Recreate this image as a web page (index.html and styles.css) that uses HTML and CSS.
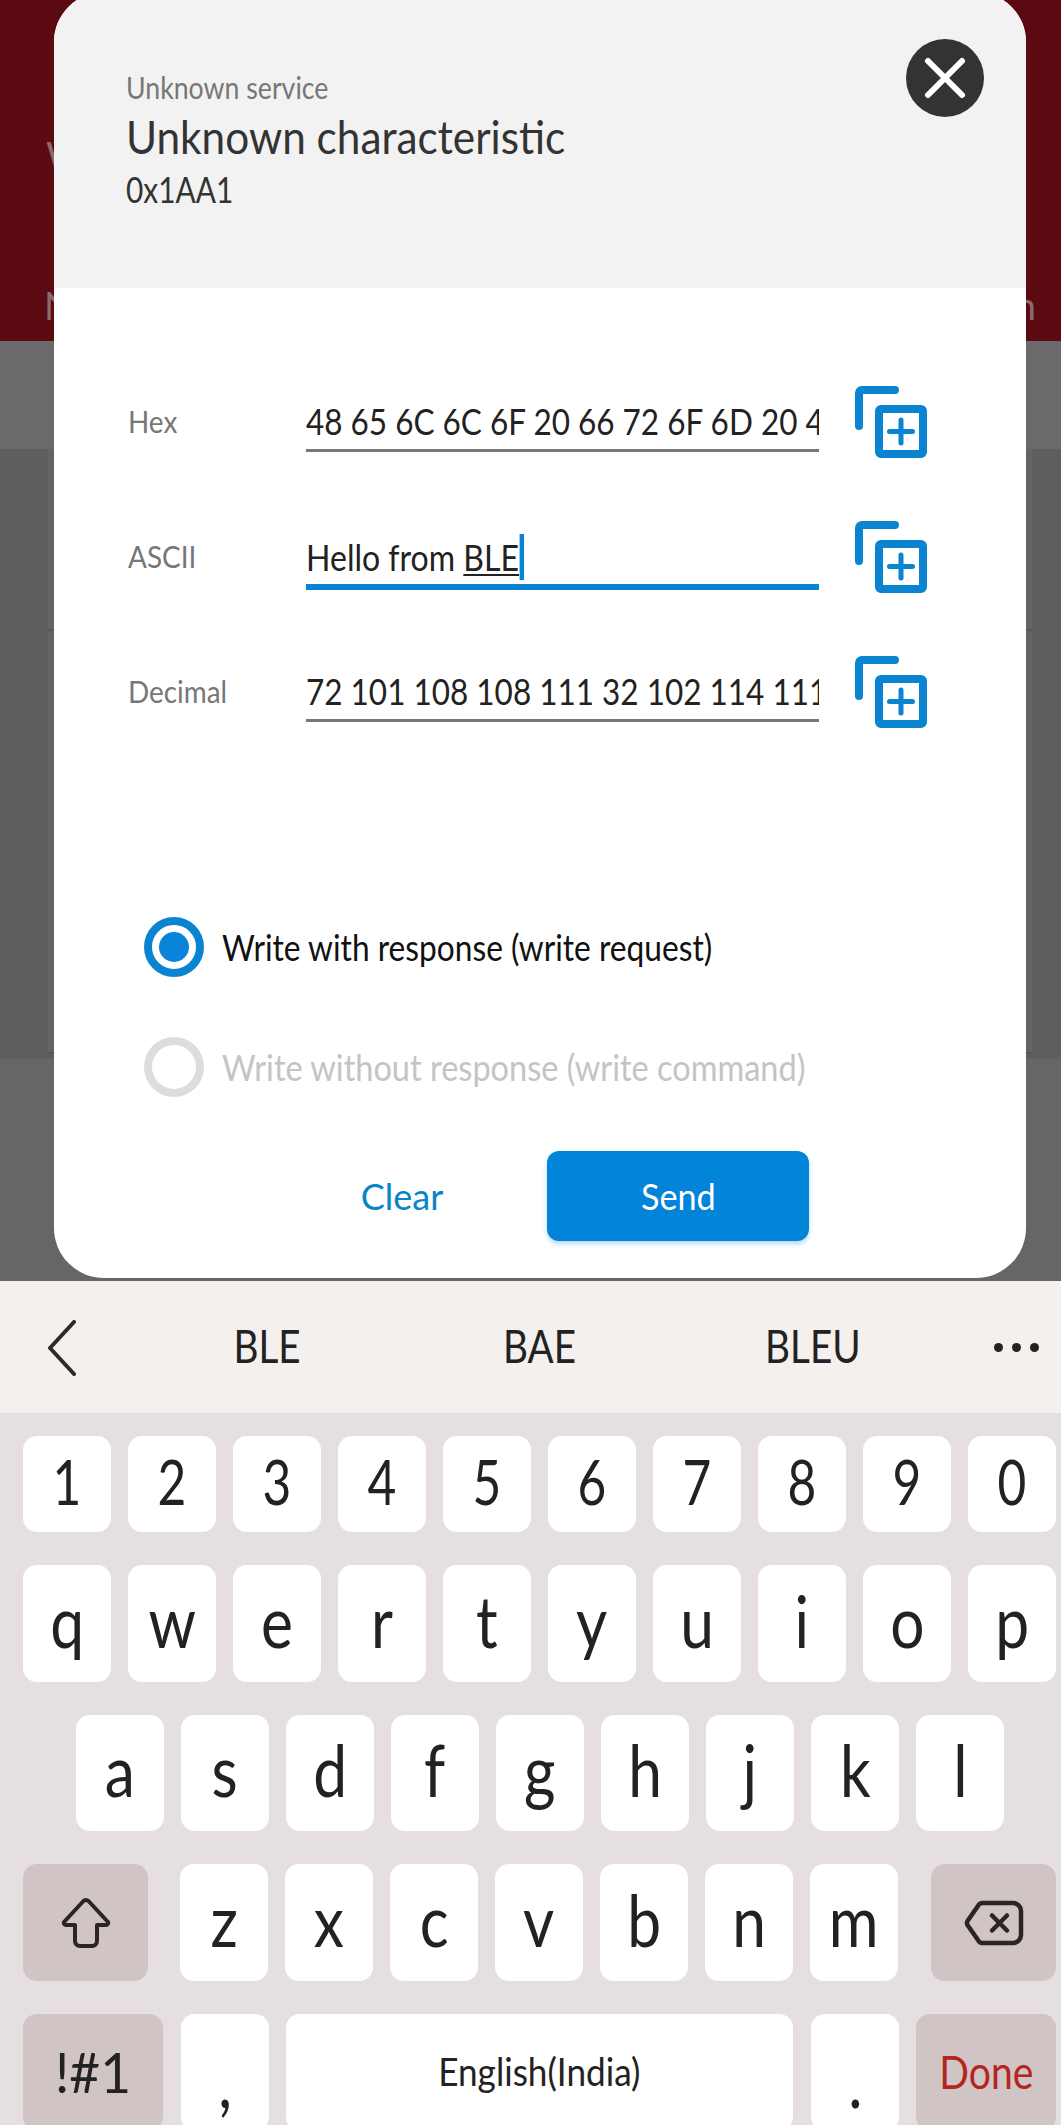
FILE: index.html
```html
<!DOCTYPE html>
<html lang="en">
<head>
  <meta charset="UTF-8" />
  <meta name="viewport" content="width=device-width, initial-scale=1.0"/>
  <title>Write characteristic</title>
  <link rel="stylesheet" href="styles.css">
</head>
<body>

  <svg class="defs" width="0" height="0">
    <symbol id="copy-icon" viewBox="0 0 72 72">
      <path d="M4 40V7a3 3 0 0 1 3-3h33" fill="none" stroke="#0a84d0" stroke-width="8" stroke-linecap="round"/>
      <rect x="24" y="23" width="44" height="45" rx="2" fill="none" stroke="#0a84d0" stroke-width="8"/>
      <path d="M46 34v23M34.500 45.500h23" fill="none" stroke="#0a84d0" stroke-width="5" stroke-linecap="round"/>
    </symbol>
  </svg>

  <!-- App behind the dialog -->
  <div class="backdrop">
    <div class="app-bar">
      <span class="app-bar-w">W</span>
      <div class="app-tabs"><span>N</span><span>n</span></div>
    </div>
    <div class="app-strip"></div>
    <div class="app-list">
      <div class="app-card"></div>
      <div class="app-card"></div>
    </div>

    <!-- Dialog -->
    <div class="modal">
      <div class="modal-head">
        <div class="modal-titles">
          <div class="service"><span>Unknown service</span></div>
          <div class="characteristic"><span>Unknown characteristic</span></div>
          <div class="uuid"><span>0x1AA1</span></div>
        </div>
        <div class="close-btn">
          <svg width="44" height="44" viewBox="0 0 44 44">
            <path d="M5 5l34 34M39 5L5 39" stroke="#fff" stroke-width="6" stroke-linecap="round"/>
          </svg>
        </div>
      </div>

      <div class="modal-body">
        <div class="field-row">
          <div class="field-label"><span>Hex</span></div>
          <div class="field-value"><span>48 65 6C 6C 6F 20 66 72 6F 6D 20 42 4C 45</span></div>
          <svg class="copy"><use href="#copy-icon"/></svg>
        </div>
        <div class="field-row">
          <div class="field-label"><span>ASCII</span></div>
          <div class="field-value field-active"><span>Hello from <u>BLE</u><i class="caret"></i></span></div>
          <svg class="copy"><use href="#copy-icon"/></svg>
        </div>
        <div class="field-row">
          <div class="field-label"><span>Decimal</span></div>
          <div class="field-value"><span>72 101 108 108 111 32 102 114 111 109 32 66 76 69</span></div>
          <svg class="copy"><use href="#copy-icon"/></svg>
        </div>

        <div class="radio-group">
          <div class="radio-row">
            <span class="radio radio-on"></span>
            <span class="radio-text">Write with response (write request)</span>
          </div>
          <div class="radio-row radio-off">
            <span class="radio"></span>
            <span class="radio-text">Write without response (write command)</span>
          </div>
        </div>

        <div class="actions">
          <div class="btn-clear">Clear</div>
          <div class="btn-send"><span>Send</span></div>
        </div>
      </div>
    </div>
  </div>

  <!-- Keyboard suggestions -->
  <div class="suggest">
    <svg class="suggest-back" width="30" height="56" viewBox="0 0 30 56">
      <path d="M27 2L3 28l24 26" fill="none" stroke="#2b2b2b" stroke-width="4" stroke-linecap="round" stroke-linejoin="round"/>
    </svg>
    <div class="suggest-word"><span>BLE</span></div>
    <div class="suggest-word"><span>BAE</span></div>
    <div class="suggest-word"><span>BLEU</span></div>
    <div class="suggest-more"><i></i><i></i><i></i></div>
  </div>

  <!-- Keyboard -->
  <div class="keyboard">
    <div class="key-row row-digits">
      <div class="key"><span>1</span></div><div class="key"><span>2</span></div><div class="key"><span>3</span></div><div class="key"><span>4</span></div><div class="key"><span>5</span></div>
      <div class="key"><span>6</span></div><div class="key"><span>7</span></div><div class="key"><span>8</span></div><div class="key"><span>9</span></div><div class="key"><span>0</span></div>
    </div>
    <div class="key-row row-top">
      <div class="key"><span>q</span></div><div class="key"><span>w</span></div><div class="key"><span>e</span></div><div class="key"><span>r</span></div><div class="key"><span>t</span></div>
      <div class="key"><span>y</span></div><div class="key"><span>u</span></div><div class="key"><span>i</span></div><div class="key"><span>o</span></div><div class="key"><span>p</span></div>
    </div>
    <div class="key-row row-home">
      <div class="key"><span>a</span></div><div class="key"><span>s</span></div><div class="key"><span>d</span></div><div class="key"><span>f</span></div><div class="key"><span>g</span></div>
      <div class="key"><span>h</span></div><div class="key"><span>j</span></div><div class="key"><span>k</span></div><div class="key"><span>l</span></div>
    </div>
    <div class="key-row row-shift">
      <div class="key key-mod key-shift">
        <svg width="50" height="52" viewBox="0 0 50 52">
          <path d="M22.500 4L3.500 24.500a2 2 0 0 0 1.500 3.500H14V44a5 5 0 0 0 5 5H31a5 5 0 0 0 5-5V28H45a2 2 0 0 0 1.500-3.500L27.500 4a3.500 3.500 0 0 0-5 0Z" fill="none" stroke="#2b2526" stroke-width="4" stroke-linejoin="round"/>
        </svg>
      </div>
      <div class="key"><span>z</span></div><div class="key"><span>x</span></div><div class="key"><span>c</span></div><div class="key"><span>v</span></div><div class="key"><span>b</span></div>
      <div class="key"><span>n</span></div><div class="key"><span>m</span></div>
      <div class="key key-mod key-del">
        <svg width="60" height="46" viewBox="0 0 60 46">
          <path d="M18 3H49a8 8 0 0 1 8 8V35a8 8 0 0 1-8 8H18a4 4 0 0 1-3-1.500L3.500 25a4 4 0 0 1 0-4L15 4.500A4 4 0 0 1 18 3Z" fill="none" stroke="#2b2526" stroke-width="4.500" stroke-linejoin="round"/>
          <path d="M28 15.500l15 15M43 15.500l-15 15" stroke="#2b2526" stroke-width="4.500" stroke-linecap="round"/>
        </svg>
      </div>
    </div>
    <div class="key-row row-bottom">
      <div class="key key-mod key-sym"><span>!#1</span></div>
      <div class="key key-punct"><span>,</span></div>
      <div class="key key-space"><span>English(India)</span></div>
      <div class="key key-punct"><span>.</span></div>
      <div class="key key-mod key-done"><span>Done</span></div>
    </div>
  </div>

</body>
</html>
```

FILE: styles.css
```css
/* ======= Base ======= */
html, body {
  margin: 0;
  padding: 0;
  height: 2125px;
  overflow: hidden;
}
body {
  width: 1061px;
  font-family: "Lato", "Liberation Sans", sans-serif;
  background: #e6dfe1;
  color: #222;
}
.defs {
  display: block;
  height: 0;
}

/* The screen uses a tall narrow font: squeeze the nearest installed one */
.service span, .characteristic span, .uuid span,
.field-label span, .field-value span, .radio-text {
  display: inline-block;
  transform-origin: left center;
}
.btn-send span, .suggest-word span, .key span {
  display: inline-block;
  transform-origin: center;
}

/* ======= App behind the dialog ======= */
.backdrop {
  position: relative;
  height: 1281px;
  background: #666;
  overflow: hidden;
}
.app-bar {
  height: 341px;
  box-sizing: border-box;
  background: #5a0a10;
  color: #8d6a6d;
  padding: 136px 25px 0 46px;
  font-size: 38px;
  line-height: 38px;
}
.app-tabs {
  display: flex;
  justify-content: space-between;
  margin: 112px 0 0 -2px;
}
.app-strip {
  height: 108px;
  background: #6a6a6a;
}
.app-list {
  height: 610px;
  box-sizing: border-box;
  background: #5e5e5e;
  padding: 0 29px 0 48px;
}
.app-card {
  height: 180px;
  background: #646464;
  border-bottom: 2px solid #565656;
}
.app-card + .app-card {
  height: 421px;
}

/* ======= Dialog ======= */
.modal {
  position: absolute;
  left: 54px;
  top: -8px;
  width: 972px;
  height: 1286px;
  background: #fff;
  border-radius: 50px;
  overflow: hidden;
}
.modal-head {
  height: 296px;
  box-sizing: border-box;
  background: #f2f2f2;
  padding: 77px 42px 0 72px;
  display: flex;
  justify-content: space-between;
  align-items: flex-start;
}
.service {
  font-size: 30px;
  line-height: 36px;
  color: #777;
}
.service span {
  transform: scaleX(0.89);
}
.characteristic {
  font-size: 46px;
  line-height: 54px;
  margin-top: 5px;
  color: #333;
}
.characteristic span {
  transform: scaleX(0.92);
}
.uuid {
  font-size: 36px;
  line-height: 44px;
  margin-top: 3px;
  color: #333;
}
.uuid span {
  transform: scaleX(0.83);
}
.close-btn {
  width: 78px;
  height: 78px;
  margin-top: -30px;
  border-radius: 50%;
  background: #333;
  display: flex;
  align-items: center;
  justify-content: center;
}

.modal-body {
  padding: 80px 0 0 74px;
}
.field-row {
  display: flex;
  align-items: flex-end;
  height: 84px;
  margin-bottom: 51px;
}
.field-label {
  width: 178px;
  font-size: 30px;
  line-height: 40px;
  color: #777;
  padding-bottom: 11px;
}
.field-label span {
  transform: scaleX(0.93);
}
.field-value {
  width: 513px;
  box-sizing: border-box;
  height: 50px;
  font-size: 36px;
  line-height: 38px;
  white-space: nowrap;
  overflow: hidden;
  border-bottom: 3px solid #777;
  color: #222;
}
.field-value span {
  transform: scaleX(0.875);
}
.field-active {
  border-bottom: 6px solid #0a84d0;
  height: 56px;
  margin-bottom: -3px;
}
.field-active span {
  transform: scaleX(0.89);
}
.field-active u {
  text-underline-offset: 3px;
  text-decoration-thickness: 2px;
}
.caret {
  display: inline-block;
  width: 5px;
  height: 46px;
  margin-left: 1px;
  background: #0a84d0;
  vertical-align: -9px;
}
.copy {
  width: 72px;
  height: 72px;
  margin: 0 0 -6px 36px;
  flex: none;
}

/* ======= Write type ======= */
.radio-group {
  margin: 195px 0 0 16px;
}
.radio-row {
  display: flex;
  align-items: center;
  height: 60px;
  margin-bottom: 60px;
}
.radio {
  width: 60px;
  height: 60px;
  box-sizing: border-box;
  border: 8px solid #ddd;
  border-radius: 50%;
  display: flex;
  align-items: center;
  justify-content: center;
  margin-right: 18px;
  flex: none;
}
.radio-on {
  border-color: #0a84d0;
}
.radio-on::after {
  content: "";
  width: 30px;
  height: 30px;
  border-radius: 50%;
  background: #0a84d8;
}
.radio-text {
  font-size: 36px;
  color: #111;
  white-space: nowrap;
  transform: scaleX(0.88);
}
.radio-off .radio-text {
  color: #c4c4c4;
  transform: scaleX(0.903);
}

/* ======= Buttons ======= */
.actions {
  display: flex;
  align-items: center;
  margin: -6px 0 0 175px;
}
.btn-clear {
  width: 198px;
  margin-right: 46px;
  text-align: center;
  font-size: 36px;
  color: #0a84c8;
}
.btn-send {
  width: 262px;
  height: 90px;
  border-radius: 12px;
  background: #0284d8;
  color: #fff;
  font-size: 36px;
  display: flex;
  align-items: center;
  justify-content: center;
  box-shadow: 0 3px 5px rgba(2, 132, 216, 0.3);
}
.btn-send span {
  transform: scaleX(0.95);
}

/* ======= Suggestions ======= */
.suggest {
  height: 132px;
  background: #f3f0ee;
  display: flex;
  align-items: center;
  padding: 0 0 0 47px;
}
.suggest-back {
  flex: none;
  margin-top: 2px;
}
.suggest-word {
  width: 273px;
  text-align: center;
  font-size: 46px;
  color: #222;
  padding-bottom: 3px;
}
.suggest-word span {
  transform: scaleX(0.84);
}
.suggest-word:first-of-type {
  margin-left: 53px;
}
.suggest-more {
  display: flex;
  gap: 9px;
  margin-left: 45px;
}
.suggest-more i {
  width: 9px;
  height: 9px;
  border-radius: 50%;
  background: #222;
}

/* ======= Keyboard ======= */
.keyboard {
  padding-top: 23px;
}
.key-row {
  display: flex;
  height: 117px;
  margin-bottom: 33px;
  padding-left: 23px;
  gap: 17px;
}
.key {
  width: 88px;
  flex: none;
  box-sizing: border-box;
  padding-bottom: 8px;
  background: #fff;
  border-radius: 14px;
  display: flex;
  align-items: center;
  justify-content: center;
  font-size: 72px;
  color: #222;
}
.key span {
  transform: scaleX(0.84);
}
.row-digits {
  height: 96px;
}
.row-digits .key {
  font-size: 62px;
  padding-bottom: 6px;
}
.row-digits .key span {
  transform: scaleX(0.8);
}
.row-home {
  height: 116px;
  padding-left: 76px;
}
.key-mod {
  background: #d1c4c4;
}
.key-shift {
  width: 125px;
  margin-right: 15px;
  padding-bottom: 0;
}
.key-del {
  width: 125px;
  margin-left: 16px;
  padding-bottom: 0;
}
.key-sym {
  width: 140px;
  margin-right: 1px;
  font-size: 56px;
  padding-bottom: 3px;
}
.key-sym span {
  transform: scaleX(0.95);
}
.key-punct {
  padding: 14px 0 0;
}
.key-space {
  width: 507px;
  margin-right: 1px;
  font-size: 38px;
  padding-bottom: 3px;
}
.key-space span {
  transform: scaleX(0.925);
}
.key-done {
  width: 140px;
  font-size: 46px;
  color: #b3261e;
  padding-bottom: 3px;
}
.key-done span {
  transform: scaleX(0.85);
}
```
